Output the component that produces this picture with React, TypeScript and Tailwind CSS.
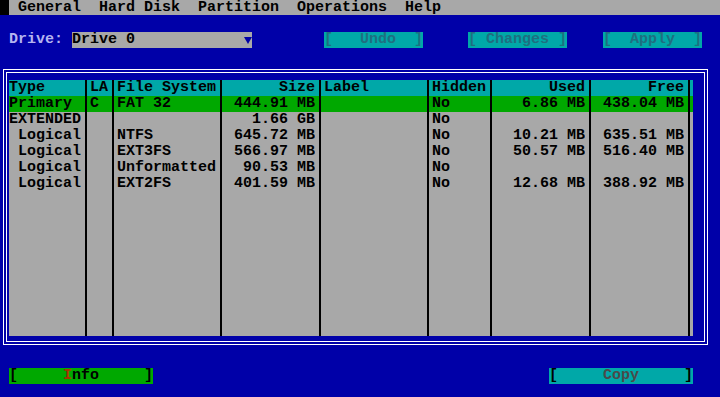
import React from "react";

const BLUE = "bg-[#0000a8]";

type Col = { w: string; right?: boolean };
const cols: Col[] = [
  { w: "w-[72px]" },
  { w: "w-[18px]" },
  { w: "w-[99px]" },
  { w: "w-[90px]", right: true },
  { w: "w-[99px]" },
  { w: "w-[54px]" },
  { w: "w-[90px]", right: true },
  { w: "w-[90px]", right: true },
];

const header = ["Type", "LA", "File System", "Size", "Label", "Hidden", "Used", "Free"];
const rows: string[][] = [
  ["Primary", "C", "FAT 32", "444.91 MB", "", "No", "6.86 MB", "438.04 MB"],
  ["EXTENDED", "", "", "1.66 GB", "", "No", "", ""],
  [" Logical", "", "NTFS", "645.72 MB", "", "No", "10.21 MB", "635.51 MB"],
  [" Logical", "", "EXT3FS", "566.97 MB", "", "No", "50.57 MB", "516.40 MB"],
  [" Logical", "", "Unformatted", "90.53 MB", "", "No", "", ""],
  [" Logical", "", "EXT2FS", "401.59 MB", "", "No", "12.68 MB", "388.92 MB"],
];

function Sep() {
  return (
    <div className="w-[9px] shrink-0 h-full flex">
      <div className="ml-[4px] w-[2px] h-full bg-black" />
    </div>
  );
}

function Row({ cells, bg, grow }: { cells: string[]; bg: string; grow?: boolean }) {
  return (
    <div className={`flex ${grow ? "flex-1" : "h-[16px]"} ${bg}`}>
      {cols.map((c, i) => (
        <React.Fragment key={i}>
          <div
            className={`${c.w} shrink-0 h-full whitespace-pre overflow-hidden ${c.right ? "text-right" : "text-left"}`}
          >
            {cells[i] ?? ""}
          </div>
          <Sep />
        </React.Fragment>
      ))}
    </div>
  );
}

export default function App() {
  return (
    <div
      className={`w-[720px] h-[397px] overflow-hidden ${BLUE} flex flex-col text-[15px] leading-[16px] font-bold text-black`}
      style={{ fontFamily: '"Liberation Mono", "DejaVu Sans Mono", monospace' }}
    >
      {/* Menu bar */}
      <div className="flex h-[16px]">
        <div className="w-[9px] h-[15px] bg-black" />
        <div className="flex-1 h-[15px] bg-[#a8a8a8] whitespace-pre">
          {" General  Hard Disk  Partition  Operations  Help"}
        </div>
      </div>
      <div className="h-[16px]" />
      {/* Drive row */}
      <div className="flex h-[16px] whitespace-pre">
        <div className="w-[72px] text-[#b4b4f0]">{" Drive:"}</div>
        <div className="w-[171px] bg-[#a8a8a8]">{"Drive 0"}</div>
        <div className="w-[9px] bg-[#a8a8a8] flex items-center justify-center">
          <svg width="8" height="10" viewBox="0 0 8 10">
            <path d="M0 2 L8 2 L4 9 Z" fill="#0000a8" />
          </svg>
        </div>
        <div className="w-[72px]" />
        <div className="w-[99px] bg-[#00a8a8] text-[#1f6f80]">{"[   Undo  ]"}</div>
        <div className="w-[45px]" />
        <div className="w-[99px] bg-[#00a8a8] text-[#1f6f80]">{"[ Changes ]"}</div>
        <div className="w-[36px]" />
        <div className="w-[99px] bg-[#00a8a8] text-[#1f6f80]">{"[  Apply  ]"}</div>
      </div>
      <div className="h-[16px]" />
      {/* Double-line frame */}
      <div className="mt-[5px] ml-[3px] w-[705px] h-[276px] border border-white p-[2px]">
        <div className="w-full h-full border border-white pl-[2px] pt-[7px] pb-[5px]">
          <div className="w-[684px] h-full flex flex-col">
            <Row cells={header} bg="bg-[#00a8a8]" />
            {rows.map((r, i) => (
              <Row key={i} cells={r} bg={i === 0 ? "bg-[#00a800]" : "bg-[#a8a8a8]"} />
            ))}
            <Row cells={[]} bg="bg-[#a8a8a8]" grow />
          </div>
        </div>
      </div>
      {/* Bottom buttons */}
      <div className="mt-[23px] flex h-[16px] whitespace-pre">
        <div className="w-[9px]" />
        <div className="w-[144px] bg-[#00a800]">
          {"[     "}
          <span className="text-[#a83000]">I</span>
          {"nfo     ]"}
        </div>
        <div className="w-[396px]" />
        <div className="w-[144px] bg-[#00a8a8]">
          {"[     "}
          <span className="text-[#4a4a4a]">Copy</span>
          {"     ]"}
        </div>
      </div>
    </div>
  );
}
